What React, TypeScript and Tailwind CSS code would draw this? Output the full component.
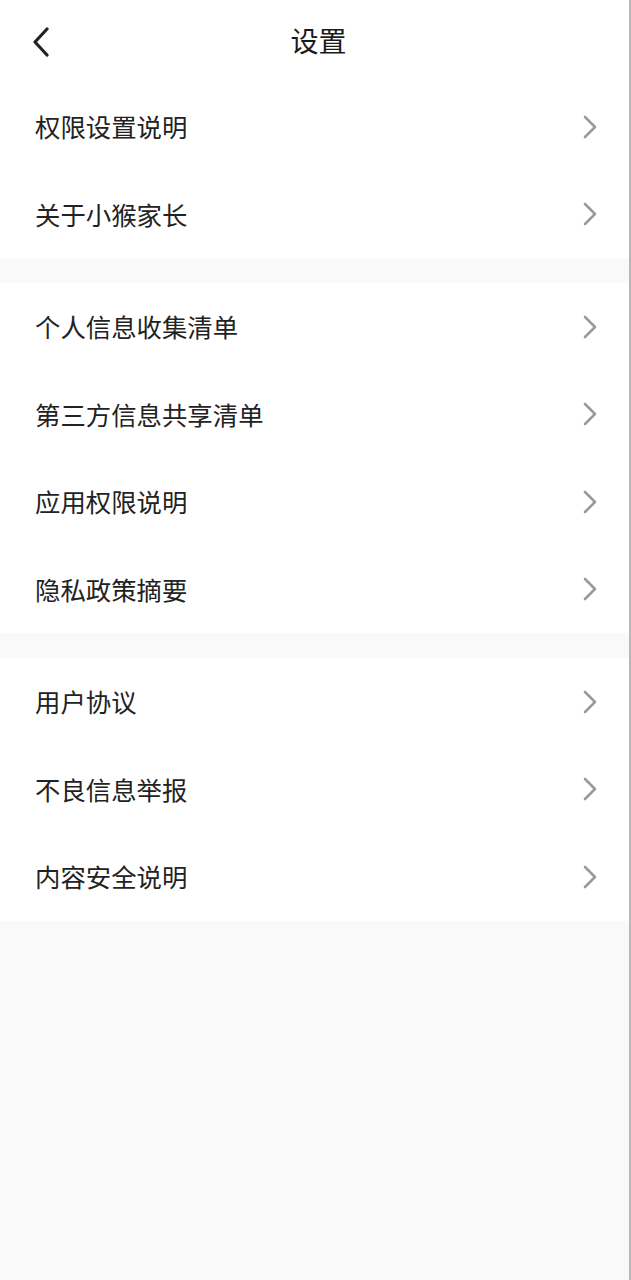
import { ReactNode } from 'react'

const groups: string[][] = [
  ['权限设置说明', '关于小猴家长'],
  ['个人信息收集清单', '第三方信息共享清单', '应用权限说明', '隐私政策摘要'],
  ['用户协议', '不良信息举报', '内容安全说明'],
]

function ChevronRight() {
  return (
    <svg width="16" height="24" viewBox="0 0 16 24" fill="none">
      <polyline
        points="3,2 13,12 3,22"
        stroke="#9a9a9a"
        strokeWidth="2.6"
        strokeLinecap="round"
        strokeLinejoin="round"
      />
    </svg>
  )
}

function BackIcon() {
  return (
    <svg width="20" height="30" viewBox="0 0 20 30" fill="none">
      <polyline
        points="16,2 4,15 16,28"
        stroke="#222"
        strokeWidth="3.2"
        strokeLinecap="round"
        strokeLinejoin="round"
      />
    </svg>
  )
}

function Row({ children }: { children: ReactNode }) {
  return (
    <div className="flex h-[87.5px] items-center justify-between pl-[35px] pr-[31px]">
      <span className="text-[25.4px] leading-none text-[#222]">{children}</span>
      <ChevronRight />
    </div>
  )
}

export default function App() {
  return (
    <div
      className="min-h-[1280px] w-full border-r-2 border-[#b8b8b8] bg-[#f9f9f9]"
      style={{ fontFamily: '"Noto Sans CJK SC", "Noto Sans", sans-serif' }}
    >
      <header className="relative flex h-[83px] items-center justify-center bg-white">
        <button type="button" className="absolute left-[31px] top-[27px]">
          <BackIcon />
        </button>
        <h1 className="-mt-[3px] ml-[8px] text-[28px] leading-none text-[#1a1a1a]">设置</h1>
      </header>
      <div className="flex flex-col gap-[25px]">
        {groups.map((items, i) => (
          <section key={i} className="bg-white">
            {items.map((label) => (
              <Row key={label}>{label}</Row>
            ))}
          </section>
        ))}
      </div>
    </div>
  )
}
